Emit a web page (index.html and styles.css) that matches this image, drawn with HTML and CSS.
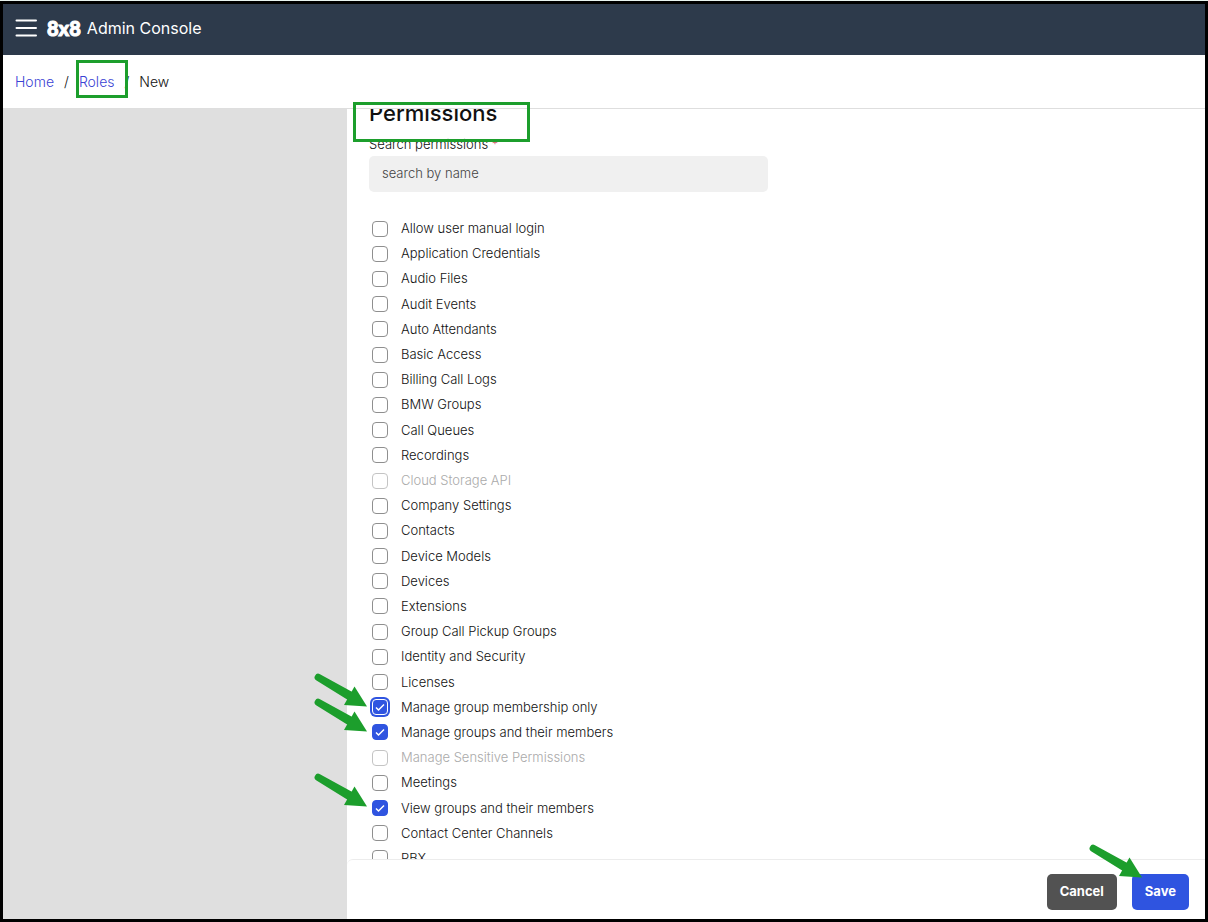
FILE: index.html
```html
<!DOCTYPE html>
<html lang="en">
<head>
  <meta charset="UTF-8" />
  <meta name="viewport" content="width=device-width, initial-scale=1.0" />
  <title>8x8 Admin Console</title>
  <link rel="stylesheet" href="styles.css">
</head>
<body>
  <svg class="defs" aria-hidden="true">
    <symbol id="arrow" viewBox="0 0 53 35">
      <path d="M6 1.200 L42 21 L38 29.500 L2.500 7.600 A3.600 3.600 0 0 1 6 1.200 Z" fill="#1c9e2c"/>
      <path d="M40.500 13.500 L53 33.500 L30 32 Z" fill="#1c9e2c"/>
    </symbol>
  </svg>

  <div class="app">
    <header class="topbar">
      <button type="button" class="menu-btn" aria-label="Menu">
        <svg width="22" height="18" viewBox="0 0 22 18">
          <path d="M1.500 1.500 H21 M1.500 9 H21 M1.500 16.500 H21" stroke="#fff" stroke-width="2" stroke-linecap="round"/>
        </svg>
      </button>
      <span class="logo">8x8</span>
      <span class="product">Admin Console</span>
    </header>

    <nav class="breadcrumb">
      <a href="#">Home</a>
      <span>/</span>
      <a href="#" class="marked">Roles</a>
      <span>/</span>
      <span>New</span>
    </nav>

    <div class="workspace">
      <aside class="sidebar"></aside>
      <main class="panel">
        <div class="scroll">
          <div class="content">
            <h2>Permissions</h2>
            <label class="search-label" for="search">Search permissions <span class="required">*</span></label>
            <input type="text" class="search" id="search" placeholder="search by name">

            <ul class="permissions">
              <li><input type="checkbox" id="p1"><label for="p1">Allow user manual login</label></li>
              <li><input type="checkbox" id="p2"><label for="p2">Application Credentials</label></li>
              <li><input type="checkbox" id="p3"><label for="p3">Audio Files</label></li>
              <li><input type="checkbox" id="p4"><label for="p4">Audit Events</label></li>
              <li><input type="checkbox" id="p5"><label for="p5">Auto Attendants</label></li>
              <li><input type="checkbox" id="p6"><label for="p6">Basic Access</label></li>
              <li><input type="checkbox" id="p7"><label for="p7">Billing Call Logs</label></li>
              <li><input type="checkbox" id="p8"><label for="p8">BMW Groups</label></li>
              <li><input type="checkbox" id="p9"><label for="p9">Call Queues</label></li>
              <li><input type="checkbox" id="p10"><label for="p10">Recordings</label></li>
              <li><input type="checkbox" id="p11" disabled><label for="p11">Cloud Storage API</label></li>
              <li><input type="checkbox" id="p12"><label for="p12">Company Settings</label></li>
              <li><input type="checkbox" id="p13"><label for="p13">Contacts</label></li>
              <li><input type="checkbox" id="p14"><label for="p14">Device Models</label></li>
              <li><input type="checkbox" id="p15"><label for="p15">Devices</label></li>
              <li><input type="checkbox" id="p16"><label for="p16">Extensions</label></li>
              <li><input type="checkbox" id="p17"><label for="p17">Group Call Pickup Groups</label></li>
              <li><input type="checkbox" id="p18"><label for="p18">Identity and Security</label></li>
              <li><input type="checkbox" id="p19"><label for="p19">Licenses</label></li>
              <li><input type="checkbox" id="p20" class="focused" checked><label for="p20">Manage group membership only</label><svg class="arrow"><use href="#arrow"/></svg></li>
              <li><input type="checkbox" id="p21" checked><label for="p21">Manage groups and their members</label><svg class="arrow"><use href="#arrow"/></svg></li>
              <li><input type="checkbox" id="p22" disabled><label for="p22">Manage Sensitive Permissions</label></li>
              <li><input type="checkbox" id="p23"><label for="p23">Meetings</label></li>
              <li><input type="checkbox" id="p24" checked><label for="p24">View groups and their members</label><svg class="arrow"><use href="#arrow"/></svg></li>
              <li><input type="checkbox" id="p25"><label for="p25">Contact Center Channels</label></li>
              <li><input type="checkbox" id="p26"><label for="p26">PBX</label></li>
            </ul>
          </div>
        </div>

        <footer class="actions">
          <button type="button" class="btn btn-cancel">Cancel</button>
          <button type="button" class="btn btn-save">Save<svg class="arrow"><use href="#arrow"/></svg></button>
        </footer>
        <div class="heading-mark"></div>
      </main>
    </div>
  </div>
</body>
</html>
```
FILE: styles.css
```css
* {
  box-sizing: border-box;
}
body {
  margin: 0;
  padding-top: 1px;
  height: 100vh;
  background: #e8f3ee;
  font-family: Inter, "Liberation Sans", sans-serif;
  font-size: 13px;
  font-weight: 300;
  color: #111;
}
.defs {
  position: absolute;
  width: 0;
  height: 0;
}
.app {
  display: flex;
  flex-direction: column;
  height: 100%;
  border: 3px solid #000;
  background: #fff;
}

/* header */
.topbar {
  display: flex;
  align-items: center;
  height: 51px;
  padding: 0 12px 3px;
  background: #2d3a4b;
  color: #fff;
  flex: none;
}
.menu-btn {
  display: flex;
  padding: 0;
  border: none;
  background: none;
  cursor: pointer;
}
.logo {
  margin: 0 6px 0 10px;
  font-family: Lato, Inter, sans-serif;
  font-size: 20px;
  font-weight: 900;
  -webkit-text-stroke: 1px #fff;
}
.product {
  font-size: 16px;
  font-weight: 400;
}
.breadcrumb {
  display: flex;
  align-items: center;
  gap: 10px;
  height: 54px;
  padding: 0 12px;
  border-bottom: 1px solid #dedede;
  font-size: 14px;
  flex: none;
}
.breadcrumb a {
  color: #3a43d4;
  text-decoration: none;
}

/* page body */
.workspace {
  display: flex;
  flex: 1;
  min-height: 0;
}
.sidebar {
  width: 344px;
  background: #dfdfdf;
  flex: none;
}
.panel {
  position: relative;
  display: flex;
  flex-direction: column;
  flex: 1;
  min-width: 0;
}
.scroll {
  display: flex;
  flex: 1;
  min-height: 0;
  overflow-x: visible;
  overflow-y: clip;
}
.content {
  display: flex;
  flex-direction: column;
  flex: 1;
  margin: -12px 0 -12px;
  padding: 0 22px;
}
h2 {
  margin: 0;
  font-size: 22px;
  font-weight: 500;
  line-height: 32px;
}
.search-label {
  padding-top: 7px;
  line-height: 16px;
}
.required {
  color: #c8324b;
}
.search {
  width: 100%;
  max-width: 399px;
  height: 36px;
  margin: 4px 0 24px;
  padding: 0 13px 2px;
  border: none;
  border-radius: 5px;
  background: #f0f0f0;
  font: inherit;
  flex: none;
}
.search::placeholder {
  color: #444;
}

/* permission list */
.permissions {
  display: grid;
  grid-auto-rows: 1fr;
  flex: 1;
  margin: 0;
  padding: 0 3px;
  list-style: none;
}
.permissions li {
  position: relative;
  display: flex;
  align-items: center;
  gap: 13px;
}
.permissions label {
  padding-bottom: 1px;
}
.permissions input {
  appearance: none;
  width: 16px;
  height: 16px;
  margin: 0;
  border: 1px solid #8f8f8f;
  border-radius: 4px;
  background: #fff;
  flex: none;
}
.permissions input:checked {
  border-color: #2f54e0;
  background: #2f54e0 url("data:image/svg+xml,%3Csvg xmlns='http://www.w3.org/2000/svg' viewBox='0 0 14 14'%3E%3Cpath d='M3 7.500l2.500 2.500L11 4.500' fill='none' stroke='%23fff' stroke-width='1.500'/%3E%3C/svg%3E");
}
.permissions .focused:checked {
  border-color: #fff;
  box-shadow: 0 0 0 2px #2f54e0;
}
.permissions input:disabled {
  border-color: #c4c4c4;
}
.permissions input:disabled + label {
  color: #aaa;
}

/* footer */
.actions {
  display: flex;
  align-items: center;
  justify-content: flex-end;
  gap: 15px;
  height: 60px;
  padding: 4px 16px 0;
  border-top: 1px solid #ececec;
  border-top-left-radius: 6px;
  flex: none;
}
.btn {
  position: relative;
  height: 36px;
  padding: 0 13px 2px;
  border: none;
  border-radius: 5px;
  color: #fff;
  font: inherit;
  font-weight: 700;
  cursor: pointer;
}
.btn-cancel {
  background: #525252;
}
.btn-save {
  background: #2f54e0;
}

/* callouts */
.marked {
  position: relative;
}
.marked::after {
  content: "";
  position: absolute;
  inset: -13px -14px -8px -3px;
  border: 3px solid #1c9e2c;
}
.heading-mark {
  position: absolute;
  top: -7px;
  left: 6px;
  width: 177px;
  height: 40px;
  border: 3px solid #1c9e2c;
}
.arrow {
  position: absolute;
  top: -22px;
  left: -58px;
  width: 53px;
  height: 35px;
}
.btn .arrow {
  top: -30px;
  left: -43px;
}
```
